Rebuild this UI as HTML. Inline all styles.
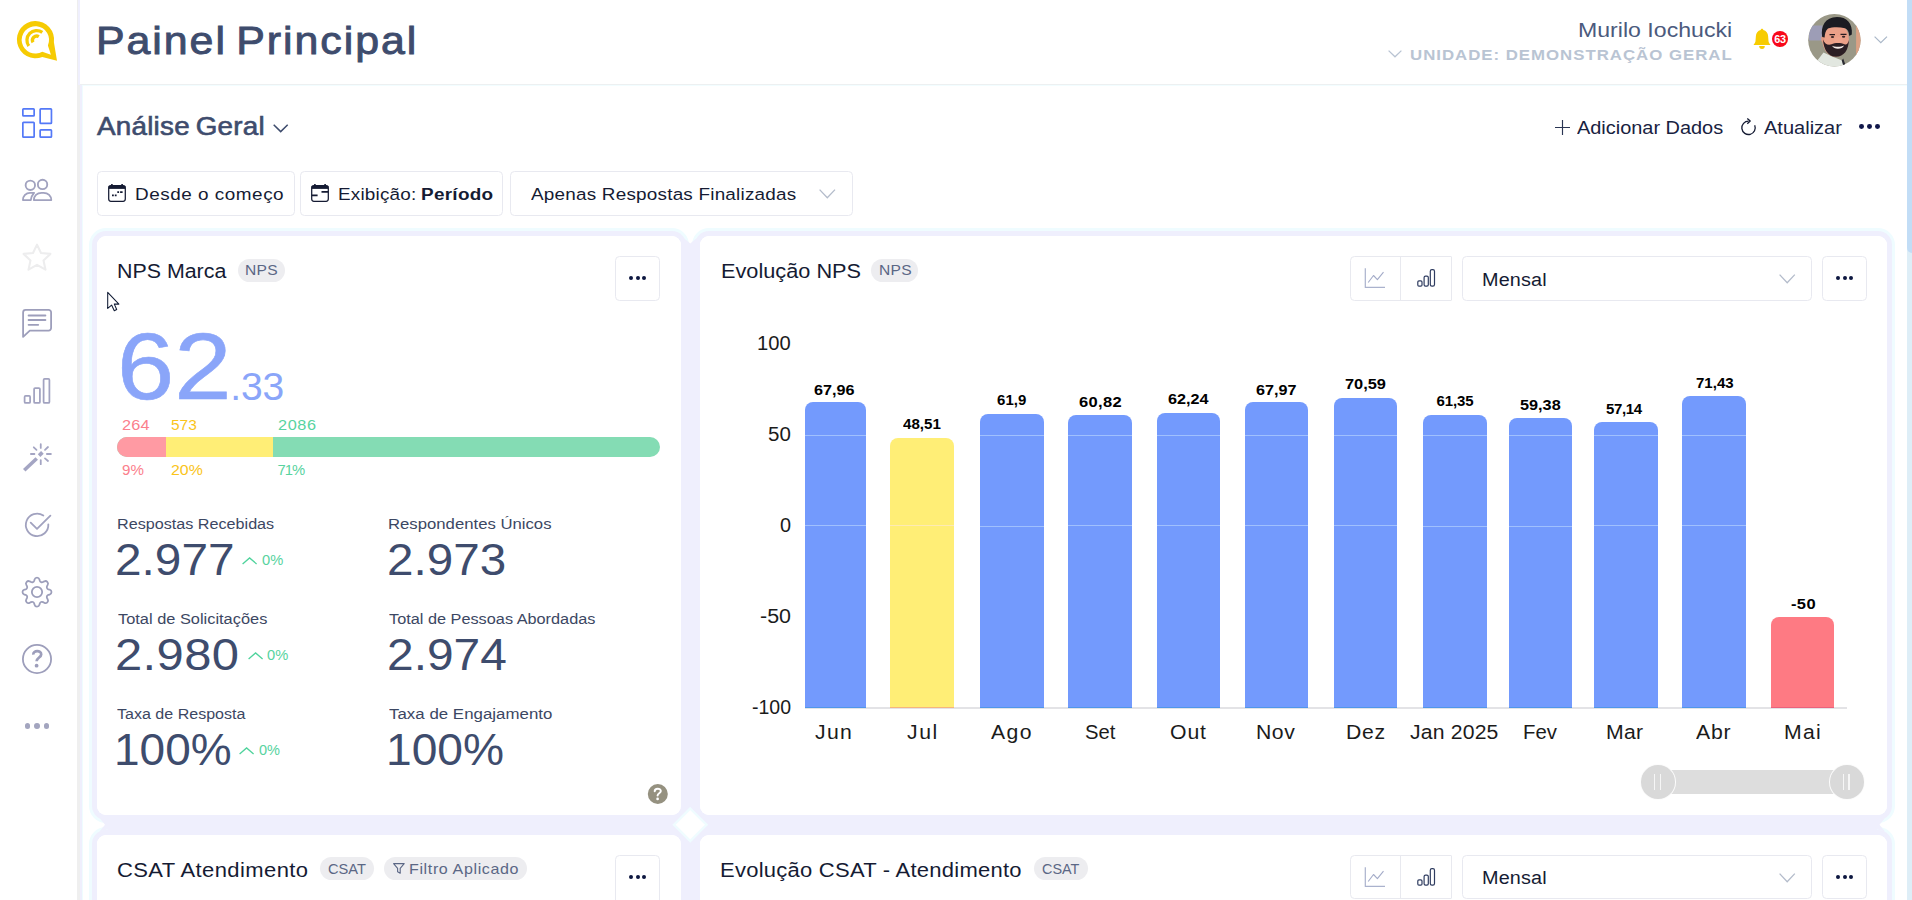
<!DOCTYPE html>
<html lang="pt-BR"><head><meta charset="utf-8"><title>Painel Principal</title>
<style>
*{box-sizing:border-box;margin:0;padding:0}
html,body{width:1912px;height:900px;overflow:hidden;background:#fff;font-family:"Liberation Sans",sans-serif}
body{position:relative}
.abs{position:absolute}
.t{position:absolute;transform-origin:0 50%;white-space:pre;line-height:1;font-family:"Liberation Sans",sans-serif}
#sidebar{position:absolute;left:0;top:0;width:77px;height:900px;background:#fff}
#sideborder{position:absolute;left:77px;top:0;width:3px;height:85px;background:linear-gradient(90deg,#eeeeee 0,#eeeeee 1px,#efeffd 1px,#efeffd 3px)}
#sideshadow{position:absolute;left:77px;top:85px;width:6px;height:815px;background:linear-gradient(90deg,#efefef 0,#efefef 3px,#efeffd 3px,#efeffd 5px,#effcff 5px,#effcff 6px)}
#header{position:absolute;left:80px;top:0;width:1827px;height:84px;background:#fff}
#hline{position:absolute;left:80px;top:84px;width:1827px;height:2px;background:linear-gradient(180deg,#edf0f1 0,#edf0f1 50%,#f2fdff 50%,#f2fdff 100%)}
#vscroll{position:absolute;left:1907px;top:0;width:5px;height:900px;background:#deeef7}
#vthumb{position:absolute;left:1907px;top:-10px;width:10px;height:262.700px;background:#c2ddf6;border-radius:5px}
.card{position:absolute;background:#fff;border-radius:9px;box-shadow:0 0 0 5px #efeffd,0 0 0 8px #effcff}
.gap{position:absolute;background:#efeffd}
.btn{position:absolute;background:#fff;border:1px solid #e8e9f0;border-radius:4.500px}
.pill{position:absolute;background:#ededf0;border-radius:12px}
.dot{position:absolute;border-radius:50%}
svg{position:absolute;overflow:visible}
.bar{position:absolute;border-radius:8px 8px 0 0}

</style></head>
<body>
<div id="sidebar"></div>
<div id="header"></div><div id="hline"></div>
<div id="sideborder"></div>
<div id="sideshadow"></div>
<div id="vscroll"></div><div id="vthumb"></div>

<!-- logo -->
<svg style="left:12px;top:15px" width="50" height="50" viewBox="12 15 50 50">
  <path fill-rule="evenodd" fill="#f6cb03" d="M42.3 56.900A18.600 18.600 0 1 1 53.900 42.200L57 60.800ZM47.900 45.400L50.900 54.700L42.300 51.700A13.700 13.700 0 1 1 47.900 45.400Z"/>
  <path d="M28.810 46.030A9.750 9.750 0 0 1 42.290 32.310" fill="none" stroke="#f6cb03" stroke-width="3.300"/>
  <path d="M33.020 42.430A4.250 4.250 0 0 1 38.830 36.620" fill="none" stroke="#f6cb03" stroke-width="3.300"/>
</svg>

<!-- sidebar icons -->
<svg style="left:22px;top:108px" width="31" height="31" viewBox="0 0 31 31" fill="none" stroke="#5479f7" stroke-width="1.700">
  <rect x=".85" y=".85" width="11.300" height="7" rx=".7"/><rect x=".85" y="14.350" width="11.300" height="14.800" rx=".7"/>
  <rect x="18.150" y=".85" width="11.300" height="14.600" rx=".7"/><rect x="18.150" y="21.850" width="11.300" height="7.300" rx=".7"/>
</svg>
<svg style="left:15px;top:170px" width="45" height="40" viewBox="15 170 45 40" fill="none" stroke="#a1a2bf" stroke-width="1.850" stroke-linejoin="round">
  <circle cx="30.330" cy="185.330" r="4.700"/><circle cx="42.550" cy="184.450" r="4.700"/>
  <path d="M33.850 200.050C33.850 196 37 192.850 41.500 192.850H43.600C48.100 192.850 51.270 196 51.270 200.050Z"/>
  <path d="M22.950 200.050C22.950 196 26 192.850 30 192.850H34.100C32.300 194.800 31.100 197.300 30.800 200.050Z"/>
</svg>
<svg style="left:15px;top:235px" width="45" height="45" viewBox="15 235 45 45" fill="none" stroke="#ededee" stroke-width="2.100" stroke-linejoin="round">
  <path d="M37 244.600L41 253L50.400 253.900L43.500 260.400L45.500 269.700L37 264.900L28.500 269.700L30.500 260.400L23.600 253.900L33 253Z"/>
</svg>
<svg style="left:15px;top:300px" width="45" height="45" viewBox="15 300 45 45" fill="none" stroke="#9d9ebb" stroke-width="1.800" stroke-linejoin="round" stroke-linecap="round">
  <path d="M25.600 309.900H48.600A2.500 2.500 0 0 1 51.100 312.400V328.100A2.500 2.500 0 0 1 48.600 330.600H29.800L23.100 336.900V312.400A2.500 2.500 0 0 1 25.600 309.900Z"/>
  <path d="M28.600 315.500H45.400M28.600 320H45.400M28.600 324.850H38.200" stroke-width="1.900"/>
</svg>
<svg style="left:15px;top:370px" width="45" height="45" viewBox="15 370 45 45" fill="none" stroke="#a2a3c0" stroke-width="1.750">
  <rect x="24.600" y="395.900" width="5.500" height="7" rx="1"/><rect x="34.100" y="388.100" width="5.800" height="14.800" rx="1"/><rect x="43.600" y="378.900" width="5.800" height="24" rx="1"/>
</svg>
<svg style="left:15px;top:435px" width="45" height="45" viewBox="15 435 45 45" fill="none" stroke="#a4a5c3" stroke-width="1.800" stroke-linecap="round">
  <path d="M24.250 470.250L36.750 458.500" stroke-width="3.600" stroke-linecap="butt"/>
  <path d="M39.100 455.600L42.400 452.400" stroke-width="3.700" stroke-linecap="butt"/>
  <path d="M40.750 444.200V447.900M40.750 460.100V464.200M30.900 454H34.400M46.900 454H50.900M33.800 447.300L36.500 449.800M45 449.800L48 447M45 458.400L48 461"/>
</svg>
<svg style="left:15px;top:505px" width="45" height="40" viewBox="15 505 45 40" fill="none" stroke="#a1a2bf" stroke-width="1.800" stroke-linecap="round" stroke-linejoin="round">
  <path d="M43.330 515.530A11.250 11.250 0 1 0 48.330 524.310"/><path d="M30.700 522.700L37 528.900L50.400 515.600"/>
</svg>
<svg style="left:22px;top:577px" width="30" height="30" viewBox="0 0 32 32" fill="none" stroke="#9c9eba" stroke-width="1.900" stroke-linejoin="round">
  <circle cx="16" cy="16" r="5.500"/>
  <path d="M13.4 2.6a2.7 2.7 0 0 1 5.2 0l.4 1.4a2.4 2.4 0 0 0 3.4 1.4l1.3-.7a2.7 2.7 0 0 1 3.7 3.7l-.7 1.3a2.4 2.4 0 0 0 1.4 3.4l1.4.4a2.7 2.7 0 0 1 0 5.2l-1.4.4a2.4 2.4 0 0 0-1.4 3.4l.7 1.3a2.7 2.7 0 0 1-3.7 3.7l-1.3-.7a2.4 2.4 0 0 0-3.4 1.4l-.4 1.4a2.7 2.7 0 0 1-5.2 0l-.4-1.4a2.4 2.4 0 0 0-3.4-1.4l-1.3.7a2.7 2.7 0 0 1-3.7-3.7l.7-1.3a2.4 2.4 0 0 0-1.4-3.4l-1.4-.4a2.7 2.7 0 0 1 0-5.2l1.4-.4a2.4 2.4 0 0 0 1.4-3.4l-.7-1.3a2.7 2.7 0 0 1 3.7-3.7l1.3.7a2.4 2.4 0 0 0 3.4-1.4z"/>
</svg>
<svg style="left:15px;top:637px" width="45" height="45" viewBox="15 637 45 45" fill="none" stroke="#9d9ebb" stroke-width="1.800">
  <circle cx="37" cy="659" r="14.100"/>
  <path d="M33.300 654.600C33.100 650.100 41.200 650 41.200 654.400C41.200 657.400 36.600 657.600 36.600 661.300" stroke-width="2.700"/>
  <circle cx="36.600" cy="665.700" r="1.900" fill="#9d9ebb" stroke="none"/>
</svg>
<div class="dot" style="left:24.7px;top:722.8px;width:5.8px;height:5.8px;background:#a3a5bf"></div>
<div class="dot" style="left:34.1px;top:722.8px;width:5.8px;height:5.8px;background:#a3a5bf"></div>
<div class="dot" style="left:43.5px;top:722.8px;width:5.8px;height:5.8px;background:#a3a5bf"></div>

<!-- header right -->
<svg style="left:1387.5px;top:50px" width="14" height="8" viewBox="0 0 14 8" fill="none" stroke="#b9c4d3" stroke-width="1.3"><path d="M.6.6L7 6.8L13.4.6"/></svg>
<svg style="left:1745px;top:20px" width="55" height="40" viewBox="1745 20 55 40" fill="#f7cc00">
  <path d="M1762 28.800C1762.800 28.800 1763.300 29.400 1763.300 30.100C1766.200 30.800 1768 33.200 1768.100 36L1768.500 41C1768.600 42.300 1769.300 43.500 1770.300 44.400V45.100H1753.700V44.400C1754.700 43.500 1755.400 42.300 1755.500 41L1755.900 36C1756 33.200 1757.800 30.800 1760.700 30.100C1760.700 29.400 1761.200 28.800 1762 28.800Z"/>
  <path d="M1759.200 46.100H1764.800A2.800 3 0 0 1 1759.200 46.100Z"/>
</svg>
<div class="dot" style="left:1772px;top:30.9px;width:16.100px;height:16.100px;background:#f8081a"></div>
<!-- avatar -->
<svg style="left:1808.2px;top:13.6px" width="53" height="53" viewBox="0 0 53 53">
  <defs><clipPath id="av"><circle cx="26.4" cy="26.3" r="26.2"/></clipPath></defs>
  <g clip-path="url(#av)">
    <rect width="53" height="53" fill="#9a9887"/>
    <rect x="1" y="11.500" width="13.500" height="15" fill="#9d9db6"/>
    <rect x="48.100" y="4" width="5" height="46" fill="#dba184"/>
    <path d="M9 47L15.500 38.500L24 42.400L34.300 46.600L35.500 53H12Z" fill="#e2e7e0"/>
    <path d="M33.800 46.400L35.600 53H38.200L35.200 44.500Z" fill="#2b2b33"/>
    <ellipse cx="27.600" cy="25.600" rx="13.300" ry="17.200" fill="#eba088"/>
    <ellipse cx="14.800" cy="25" rx="1.600" ry="3" fill="#e09880"/>
    <path d="M14.200 23C12.500 12 17 3.200 29 3C38.500 3 45 9 43.800 20.500L41.300 22C41 17.500 39.500 15 37 14.200C31 12.600 24 13 20 14.500C17.500 16.500 16.800 20 16.600 23.500Z" fill="#1b1b22"/>
    <path d="M15 25.500C15.500 35 20 42.800 28 42.800C36 42.800 40.500 36 41 26C39.800 30 38.500 31 36.500 30.300C33 28.600 27 28.600 23.500 30.300C20 31.500 16.500 30 15 25.500Z" fill="#2b1e24"/>
    <path d="M24 31.800C27 33.200 33 33.200 36 31.500C34.500 35.600 26 35.800 24 31.800Z" fill="#f6ece8"/>
    <path d="M21.500 20.600H27M32.500 20.400H38.500" stroke="#2a1c20" stroke-width="1.300"/>
    <ellipse cx="24.500" cy="23" rx="1.700" ry="1" fill="#3c2626"/><ellipse cx="35.600" cy="22.800" rx="1.700" ry="1" fill="#3c2626"/>
    <ellipse cx="30.500" cy="26" rx="4.500" ry="3" fill="#f2a58f" opacity=".7"/>
  </g>
</svg>
<svg style="left:1874.2px;top:35.6px" width="14" height="8" viewBox="0 0 14 8" fill="none" stroke="#a9b7c8" stroke-width="1.2"><path d="M.6.6L6.800 6.700L13 .6"/></svg>

<!-- sub header -->
<svg style="left:273px;top:124.300px" width="16" height="9" viewBox="0 0 16 9" fill="none" stroke="#3e4c6d" stroke-width="1.5"><path d="M.7.7L7.700 7.600L14.700.7"/></svg>
<svg style="left:1554.5px;top:119.700px" width="15" height="15" viewBox="0 0 15 15" fill="none" stroke="#2a3553" stroke-width="1.150"><path d="M7.500 0V15M0 7.500H15"/></svg>
<svg style="left:1740px;top:118px" width="17" height="18" viewBox="0 0 17 18" fill="none" stroke="#151b33" stroke-width="1.300">
  <path d="M8.600 3.100A6.700 6.700 0 1 0 14.700 7.200"/><path d="M7.300.4L10.200 3.100L7.300 5.800" stroke-linejoin="round"/>
</svg>
<div class="dot" style="left:1859.3px;top:124.300px;width:4.800px;height:4.800px;background:#10174a"></div>
<div class="dot" style="left:1867.3px;top:124.300px;width:4.800px;height:4.800px;background:#10174a"></div>
<div class="dot" style="left:1875.3px;top:124.300px;width:4.800px;height:4.800px;background:#10174a"></div>

<!-- filter buttons -->
<div class="btn" style="left:97px;top:171px;width:197.500px;height:44.600px"></div>
<div class="btn" style="left:299.800px;top:171px;width:203.700px;height:44.600px"></div>
<div class="btn" style="left:509.500px;top:171px;width:343px;height:44.600px"></div>
<svg style="left:108px;top:184px" width="18" height="18" viewBox="0 0 18 18" fill="none" stroke="#151b33" stroke-width="1.250">
  <rect x=".7" y="1.600" width="16.600" height="15.700" rx="2.200"/><path d="M.7 3.400H17.300" stroke-width="3"/>
  <path d="M3.900 0V2M14.100 0V2" stroke-width="1.600"/>
  <path d="M4 11.400H5.800M6.800 11.400H8.600M9.300 8.100H11.100M12.100 8.100H14.600" stroke-width="1.700"/>
</svg>
<svg style="left:310.700px;top:184px" width="18" height="18" viewBox="0 0 18 18" fill="none" stroke="#151b33" stroke-width="1.250">
  <rect x=".7" y="1.600" width="16.600" height="15.700" rx="2.200"/><path d="M.7 3.400H17.300" stroke-width="3"/>
  <path d="M3.900 0V2M14.100 0V2" stroke-width="1.600"/>
  <path d="M.7 11.400H6.600M10.500 7.900H17.300" stroke-width="1.800"/>
</svg>
<svg style="left:819.300px;top:189.200px" width="17" height="10" viewBox="0 0 17 10" fill="none" stroke="#b4bccb" stroke-width="1.300"><path d="M.6.6L8.300 8.800L16 .6"/></svg>

<!-- cards (shadow rings) -->
<div class="card" style="left:97px;top:235.500px;width:583.500px;height:579.500px"></div>
<div class="card" style="left:700px;top:235.500px;width:1187.200px;height:579.500px"></div>
<div class="card" style="left:97px;top:835px;width:583.500px;height:100px"></div>
<div class="card" style="left:700px;top:835px;width:1187.200px;height:100px"></div>
<!-- lavender gap fill -->
<svg style="left:0;top:0" width="1912" height="900" viewBox="0 0 1912 900">
  <path fill="#efeffd" d="M683.600 238L690.250 243.500L696.900 238L695 246.500H700V900H680.500V246.500H685.500Z"/>
  <path fill="#efeffd" d="M99.500 818.100L105 824.750L99.500 831.400L107.500 829.500V835H1877V829.500L1885 831.400L1879.500 824.750L1885 818.100L1877 820V815H107.500V820Z"/>
  <path fill="#fff" stroke="#effcff" stroke-width="2.400" d="M690.250 808.500L706.500 824.750L690.250 841L674 824.750Z"/>
</svg>
<!-- card bodies -->
<div class="abs" style="left:97px;top:235.500px;width:583.500px;height:579.500px;background:#fff;border-radius:9px"></div>
<div class="abs" style="left:700px;top:235.500px;width:1187.200px;height:579.500px;background:#fff;border-radius:9px"></div>
<div class="abs" style="left:97px;top:835px;width:583.500px;height:100px;background:#fff;border-radius:9px"></div>
<div class="abs" style="left:700px;top:835px;width:1187.200px;height:100px;background:#fff;border-radius:9px"></div>
<div class="pill" style="left:237.7px;top:259px;width:47px;height:23px"></div>
<div class="btn" style="left:615.4px;top:256.3px;width:44.3px;height:44.3px"></div>
<div class="dot" style="left:629.45px;top:275.95px;width:3.90px;height:3.90px;background:#0d1740"></div>
<div class="dot" style="left:635.85px;top:275.95px;width:3.90px;height:3.90px;background:#0d1740"></div>
<div class="dot" style="left:642.25px;top:275.95px;width:3.90px;height:3.90px;background:#0d1740"></div>
<div class="abs" style="left:116.8px;top:437px;width:543.4px;height:20px;border-radius:10px;overflow:hidden;background:#84dcb4"><div class="abs" style="left:0;top:0;width:49.1px;height:20px;background:#ff9aa3"></div><div class="abs" style="left:49.1px;top:0;width:107.6px;height:20px;background:#ffee76"></div></div>
<svg style="left:242.2px;top:556.9px" width="15.2" height="7.6" viewBox="0 0 15.2 7.6" fill="none" stroke="#4fd39c" stroke-width="1.3"><path d="M.6 7.0L7.6 .9L14.6 7.0"/></svg>
<svg style="left:247.8px;top:651.6px" width="15.2" height="7.6" viewBox="0 0 15.2 7.6" fill="none" stroke="#4fd39c" stroke-width="1.3"><path d="M.6 7.0L7.6 .9L14.6 7.0"/></svg>
<svg style="left:239.2px;top:746.5px" width="15.2" height="7.6" viewBox="0 0 15.2 7.6" fill="none" stroke="#4fd39c" stroke-width="1.3"><path d="M.6 7.0L7.6 .9L14.6 7.0"/></svg>
<svg style="left:640px;top:776px" width="36" height="36" viewBox="640 776 36 36"><circle cx="657.8" cy="794" r="10" fill="#959180"/><path d="M654.7 791.2C654.7 787.9 660.8 787.9 660.8 791.1C660.8 793.3 657.6 793.3 657.6 795.6" fill="none" stroke="#fff" stroke-width="2" stroke-linecap="round"/><circle cx="657.6" cy="798.9" r="1.35" fill="#fff"/></svg>
<svg style="left:100px;top:285px" width="30" height="35" viewBox="100 285 30 35"><path d="M107.700 292.400V308.400L111.600 305.100L114.300 310.700L116.700 309.500L114.300 304.100H118.900Z" fill="#fff" stroke="#0f1a33" stroke-width="1.050" stroke-linejoin="round"/></svg>
<div class="pill" style="left:871px;top:259px;width:47px;height:23px"></div>
<div class="btn" style="left:1349.5px;top:256.3px;width:102px;height:44.3px;border-radius:4.5px 1px 1px 4.5px;border-color:#e8e9ef"></div>
<div class="abs" style="left:1400px;top:256.3px;width:1px;height:44.3px;background:#e8e9ef"></div>
<svg style="left:1340px;top:250px" width="130" height="58" viewBox="1340 250 130 58" fill="none" stroke-linejoin="round"><path d="M1365.3 268.2V287.4H1385" stroke="#aab2cd" stroke-width="1.2"/><path d="M1368.2 282.5L1373.5 275.5L1377.4 279.6L1383.5 272.1" stroke="#a3abc8" stroke-width="1.1"/><g stroke="#2f3c60" stroke-width="1.2"><rect x="1417.8" y="280.9" width="4.2" height="5.2" rx="1.2"/><rect x="1424.1" y="276.1" width="4.2" height="10" rx="1.4"/><rect x="1430.3" y="269.6" width="4.2" height="16.5" rx="1.6"/></g></svg>
<div class="btn" style="left:1462.3px;top:256.3px;width:349.3px;height:44.3px"></div>
<svg style="left:1779px;top:274.4px" width="17" height="10" viewBox="0 0 17 10" fill="none" stroke="#b4bccb" stroke-width="1.3"><path d="M.6.6L8.2 8.8L15.8.6"/></svg>
<div class="btn" style="left:1822.3px;top:256.3px;width:44.3px;height:44.3px"></div>
<div class="dot" style="left:1836.25px;top:275.95px;width:3.90px;height:3.90px;background:#0d1740"></div>
<div class="dot" style="left:1842.65px;top:275.95px;width:3.90px;height:3.90px;background:#0d1740"></div>
<div class="dot" style="left:1849.05px;top:275.95px;width:3.90px;height:3.90px;background:#0d1740"></div>
<div class="abs" style="left:805px;top:707.4px;width:1042px;height:1.3px;background:#e3e3e6"></div>
<div class="bar" style="left:805.1px;top:402.4px;width:60.5px;height:305.8px;background:#739afd"><div class="abs" style="left:0;top:32.2px;width:100%;height:1px;background:#a0c0fe"></div><div class="abs" style="left:0;top:123.1px;width:100%;height:1px;background:#a0c0fe"></div><div class="abs" style="left:0;bottom:0;width:100%;height:1px;background:#4f96ea"></div></div>
<div class="bar" style="left:890.4px;top:437.8px;width:63.6px;height:270.4px;background:#ffee76"><div class="abs" style="left:0;top:87.7px;width:100%;height:1px;background:#fdeab4"></div><div class="abs" style="left:0;bottom:0;width:100%;height:1px;background:#f6b57c"></div></div>
<div class="bar" style="left:980.1px;top:413.5px;width:63.5px;height:294.7px;background:#739afd"><div class="abs" style="left:0;top:21.1px;width:100%;height:1px;background:#a0c0fe"></div><div class="abs" style="left:0;top:112.0px;width:100%;height:1px;background:#a0c0fe"></div><div class="abs" style="left:0;bottom:0;width:100%;height:1px;background:#4f96ea"></div></div>
<div class="bar" style="left:1068.3px;top:415.4px;width:63.6px;height:292.8px;background:#739afd"><div class="abs" style="left:0;top:19.2px;width:100%;height:1px;background:#a0c0fe"></div><div class="abs" style="left:0;top:110.1px;width:100%;height:1px;background:#a0c0fe"></div><div class="abs" style="left:0;bottom:0;width:100%;height:1px;background:#4f96ea"></div></div>
<div class="bar" style="left:1156.7px;top:412.8px;width:63.6px;height:295.4px;background:#739afd"><div class="abs" style="left:0;top:21.8px;width:100%;height:1px;background:#a0c0fe"></div><div class="abs" style="left:0;top:112.7px;width:100%;height:1px;background:#a0c0fe"></div><div class="abs" style="left:0;bottom:0;width:100%;height:1px;background:#4f96ea"></div></div>
<div class="bar" style="left:1245.2px;top:402.4px;width:63.2px;height:305.8px;background:#739afd"><div class="abs" style="left:0;top:32.2px;width:100%;height:1px;background:#a0c0fe"></div><div class="abs" style="left:0;top:123.1px;width:100%;height:1px;background:#a0c0fe"></div><div class="abs" style="left:0;bottom:0;width:100%;height:1px;background:#4f96ea"></div></div>
<div class="bar" style="left:1333.5px;top:397.7px;width:63.4px;height:310.5px;background:#739afd"><div class="abs" style="left:0;top:36.9px;width:100%;height:1px;background:#a0c0fe"></div><div class="abs" style="left:0;top:127.8px;width:100%;height:1px;background:#a0c0fe"></div><div class="abs" style="left:0;bottom:0;width:100%;height:1px;background:#4f96ea"></div></div>
<div class="bar" style="left:1423.3px;top:414.5px;width:63.6px;height:293.7px;background:#739afd"><div class="abs" style="left:0;top:20.1px;width:100%;height:1px;background:#a0c0fe"></div><div class="abs" style="left:0;top:111.0px;width:100%;height:1px;background:#a0c0fe"></div><div class="abs" style="left:0;bottom:0;width:100%;height:1px;background:#4f96ea"></div></div>
<div class="bar" style="left:1508.6px;top:418.0px;width:63.4px;height:290.2px;background:#739afd"><div class="abs" style="left:0;top:16.6px;width:100%;height:1px;background:#a0c0fe"></div><div class="abs" style="left:0;top:107.5px;width:100%;height:1px;background:#a0c0fe"></div><div class="abs" style="left:0;bottom:0;width:100%;height:1px;background:#4f96ea"></div></div>
<div class="bar" style="left:1594px;top:422.1px;width:63.5px;height:286.1px;background:#739afd"><div class="abs" style="left:0;top:12.5px;width:100%;height:1px;background:#a0c0fe"></div><div class="abs" style="left:0;top:103.4px;width:100%;height:1px;background:#a0c0fe"></div><div class="abs" style="left:0;bottom:0;width:100%;height:1px;background:#4f96ea"></div></div>
<div class="bar" style="left:1682.3px;top:396.1px;width:63.4px;height:312.1px;background:#739afd"><div class="abs" style="left:0;top:38.5px;width:100%;height:1px;background:#a0c0fe"></div><div class="abs" style="left:0;top:129.4px;width:100%;height:1px;background:#a0c0fe"></div><div class="abs" style="left:0;bottom:0;width:100%;height:1px;background:#4f96ea"></div></div>
<div class="bar" style="left:1770.8px;top:616.9px;width:63.5px;height:91.3px;background:#fe7a83"><div class="abs" style="left:0;bottom:0;width:100%;height:1px;background:#ea627c"></div></div>
<div class="abs" style="left:1658px;top:770.1px;width:189px;height:23.7px;background:#dddddd"></div>
<div class="dot" style="left:1641.3px;top:765.3px;width:33.6px;height:33.6px;background:#d9d9d9;box-shadow:0 0 0 1px #fcfcfc"></div>
<div class="abs" style="left:1653.9px;top:774.1px;width:1.4px;height:15.5px;background:#f6f6f6"></div>
<div class="abs" style="left:1659.6px;top:774.1px;width:1.4px;height:15.5px;background:#f6f6f6"></div>
<div class="dot" style="left:1830.1px;top:765.3px;width:33.6px;height:33.6px;background:#d9d9d9;box-shadow:0 0 0 1px #fcfcfc"></div>
<div class="abs" style="left:1842.7px;top:774.1px;width:1.4px;height:15.5px;background:#f6f6f6"></div>
<div class="abs" style="left:1848.4px;top:774.1px;width:1.4px;height:15.5px;background:#f6f6f6"></div>
<div class="pill" style="left:320px;top:857.2px;width:54px;height:23px"></div>
<div class="pill" style="left:384px;top:857.2px;width:143px;height:23px"></div>
<svg style="left:392.6px;top:863px" width="12" height="11" viewBox="0 0 12 11" fill="none" stroke="#5b6785" stroke-width="1.1" stroke-linejoin="round"><path d="M.6.6H11.2L7.2 5.3V10.2L4.6 8.8V5.3Z"/></svg>
<div class="btn" style="left:615.4px;top:855px;width:44.3px;height:60px"></div>
<div class="dot" style="left:629.45px;top:874.75px;width:3.90px;height:3.90px;background:#0d1740"></div>
<div class="dot" style="left:635.85px;top:874.75px;width:3.90px;height:3.90px;background:#0d1740"></div>
<div class="dot" style="left:642.25px;top:874.75px;width:3.90px;height:3.90px;background:#0d1740"></div>
<div class="pill" style="left:1034px;top:857.2px;width:54px;height:23px"></div>
<div class="btn" style="left:1349.5px;top:855.0px;width:102px;height:44.3px;border-radius:4.5px 1px 1px 4.5px;border-color:#e8e9ef"></div>
<div class="abs" style="left:1400px;top:855.0px;width:1px;height:44.3px;background:#e8e9ef"></div>
<svg style="left:1340px;top:848.7px" width="130" height="58" viewBox="1340 250 130 58" fill="none" stroke-linejoin="round"><path d="M1365.3 268.2V287.4H1385" stroke="#aab2cd" stroke-width="1.2"/><path d="M1368.2 282.5L1373.5 275.5L1377.4 279.6L1383.5 272.1" stroke="#a3abc8" stroke-width="1.1"/><g stroke="#2f3c60" stroke-width="1.2"><rect x="1417.8" y="280.9" width="4.2" height="5.2" rx="1.2"/><rect x="1424.1" y="276.1" width="4.2" height="10" rx="1.4"/><rect x="1430.3" y="269.6" width="4.2" height="16.5" rx="1.6"/></g></svg>
<div class="btn" style="left:1462.3px;top:855.0px;width:349.3px;height:44.3px"></div>
<svg style="left:1779px;top:873.1px" width="17" height="10" viewBox="0 0 17 10" fill="none" stroke="#b4bccb" stroke-width="1.3"><path d="M.6.6L8.2 8.8L15.8.6"/></svg>
<div class="btn" style="left:1822.3px;top:855.0px;width:44.3px;height:44.3px"></div>
<div class="dot" style="left:1836.25px;top:874.65px;width:3.90px;height:3.90px;background:#0d1740"></div>
<div class="dot" style="left:1842.65px;top:874.65px;width:3.90px;height:3.90px;background:#0d1740"></div>
<div class="dot" style="left:1849.05px;top:874.65px;width:3.90px;height:3.90px;background:#0d1740"></div>
<div id="texts">
<span class="t" style="left:95.70px;top:20.99px;font-size:39px;font-weight:400;color:#3e4c6d;letter-spacing:1.760px;transform:scaleX(1.1000);-webkit-text-stroke:.9px #3e4c6d;word-spacing:-4px;">Painel Principal</span>
<span class="t" style="left:1577.60px;top:18.72px;font-size:21px;font-weight:400;color:#4b5a7d;letter-spacing:0.005px;transform:scaleX(1.1000);">Murilo Iochucki</span>
<span class="t" style="left:1409.70px;top:46.85px;font-size:15.3px;font-weight:bold;color:#b9c4d3;letter-spacing:0.886px;transform:scaleX(1.1000);">UNIDADE: DEMONSTRAÇÃO GERAL</span>
<span class="t" style="left:1774.20px;top:33.67px;font-size:10.9px;font-weight:bold;color:#ffffff;letter-spacing:-0.157px;transform:scaleX(1.0000);">63</span>
<span class="t" style="left:97.20px;top:114.48px;font-size:25.3px;font-weight:400;color:#3e4c6d;letter-spacing:0.208px;transform:scaleX(1.1000);-webkit-text-stroke:.6px #3e4c6d;word-spacing:-2px;">Análise Geral</span>
<span class="t" style="left:1577.20px;top:119.01px;font-size:18.3px;font-weight:400;color:#18223f;letter-spacing:0.000px;transform:scaleX(1.0896);">Adicionar Dados</span>
<span class="t" style="left:1763.90px;top:119.01px;font-size:18.3px;font-weight:400;color:#18223f;letter-spacing:0.000px;transform:scaleX(1.0952);">Atualizar</span>
<span class="t" style="left:135.20px;top:185.84px;font-size:17.2px;font-weight:400;color:#151b33;letter-spacing:0.472px;transform:scaleX(1.1000);">Desde o começo</span>
<span class="t" style="left:337.70px;top:185.84px;font-size:17.2px;font-weight:400;color:#151b33;letter-spacing:0.163px;transform:scaleX(1.1000);">Exibição:</span>
<span class="t" style="left:420.90px;top:185.84px;font-size:17.2px;font-weight:bold;color:#151b33;letter-spacing:0.268px;transform:scaleX(1.1000);">Período</span>
<span class="t" style="left:530.50px;top:185.84px;font-size:17.2px;font-weight:400;color:#151b33;letter-spacing:0.188px;transform:scaleX(1.1000);">Apenas Respostas Finalizadas</span>
<span class="t" style="left:116.93px;top:261.37px;font-size:20px;font-weight:400;color:#151b33;letter-spacing:0.000px;transform:scaleX(1.0693);">NPS Marca</span>
<span class="t" style="left:245.20px;top:263.28px;font-size:14.2px;font-weight:400;color:#5b6785;letter-spacing:0.237px;transform:scaleX(1.1000);">NPS</span>
<span class="t" style="left:116.67px;top:319.38px;font-size:95px;font-weight:400;color:#8aa5f9;letter-spacing:0.000px;transform:scaleX(1.0835);-webkit-text-stroke:.6px #8aa5f9;">62</span>
<span class="t" style="left:230.20px;top:367.29px;font-size:39px;font-weight:400;color:#8aa5f9;letter-spacing:-0.063px;transform:scaleX(1.0000);">.33</span>
<span class="t" style="left:121.90px;top:417.67px;font-size:14.8px;font-weight:400;color:#fb808c;letter-spacing:0.225px;transform:scaleX(1.1000);">264</span>
<span class="t" style="left:170.70px;top:417.67px;font-size:14.8px;font-weight:400;color:#fac41a;letter-spacing:0.000px;transform:scaleX(1.0467);">573</span>
<span class="t" style="left:277.60px;top:417.67px;font-size:14.8px;font-weight:400;color:#58d3a0;letter-spacing:0.528px;transform:scaleX(1.1000);">2086</span>
<span class="t" style="left:121.90px;top:462.77px;font-size:14.8px;font-weight:400;color:#fb808c;letter-spacing:0.000px;transform:scaleX(1.0222);">9%</span>
<span class="t" style="left:170.70px;top:462.77px;font-size:14.8px;font-weight:400;color:#fac41a;letter-spacing:0.000px;transform:scaleX(1.0727);">20%</span>
<span class="t" style="left:277.60px;top:462.77px;font-size:14.8px;font-weight:400;color:#58d3a0;letter-spacing:-1.029px;transform:scaleX(1.0000);">71%</span>
<span class="t" style="left:116.94px;top:515.85px;font-size:15.3px;font-weight:400;color:#3c4763;letter-spacing:0.000px;transform:scaleX(1.0563);">Respostas Recebidas</span>
<span class="t" style="left:115.35px;top:538.23px;font-size:44.5px;font-weight:400;color:#3e4c6d;letter-spacing:0.000px;transform:scaleX(1.0733);">2.977</span>
<span class="t" style="left:261.70px;top:552.68px;font-size:14.2px;font-weight:400;color:#58d3a0;letter-spacing:0.000px;transform:scaleX(1.0340);">0%</span>
<span class="t" style="left:388.01px;top:515.85px;font-size:15.3px;font-weight:400;color:#3c4763;letter-spacing:0.000px;transform:scaleX(1.0925);">Respondentes Únicos</span>
<span class="t" style="left:386.96px;top:538.23px;font-size:44.5px;font-weight:400;color:#3e4c6d;letter-spacing:0.000px;transform:scaleX(1.0696);">2.973</span>
<span class="t" style="left:117.50px;top:610.85px;font-size:15.3px;font-weight:400;color:#3c4763;letter-spacing:0.000px;transform:scaleX(1.0708);">Total de Solicitações</span>
<span class="t" style="left:115.30px;top:633.13px;font-size:44.5px;font-weight:400;color:#3e4c6d;letter-spacing:0.348px;transform:scaleX(1.1000);">2.980</span>
<span class="t" style="left:267.20px;top:647.68px;font-size:14.2px;font-weight:400;color:#58d3a0;letter-spacing:0.000px;transform:scaleX(1.0340);">0%</span>
<span class="t" style="left:388.90px;top:610.85px;font-size:15.3px;font-weight:400;color:#3c4763;letter-spacing:0.000px;transform:scaleX(1.0646);">Total de Pessoas Abordadas</span>
<span class="t" style="left:386.95px;top:633.13px;font-size:44.5px;font-weight:400;color:#3e4c6d;letter-spacing:0.000px;transform:scaleX(1.0763);">2.974</span>
<span class="t" style="left:117.00px;top:705.85px;font-size:15.3px;font-weight:400;color:#3c4763;letter-spacing:0.000px;transform:scaleX(1.0485);">Taxa de Resposta</span>
<span class="t" style="left:114.40px;top:727.93px;font-size:44.5px;font-weight:400;color:#3e4c6d;letter-spacing:0.000px;transform:scaleX(1.0334);">100%</span>
<span class="t" style="left:258.70px;top:742.58px;font-size:14.2px;font-weight:400;color:#58d3a0;letter-spacing:0.000px;transform:scaleX(1.0244);">0%</span>
<span class="t" style="left:389.10px;top:705.85px;font-size:15.3px;font-weight:400;color:#3c4763;letter-spacing:0.030px;transform:scaleX(1.1000);">Taxa de Engajamento</span>
<span class="t" style="left:385.99px;top:727.93px;font-size:44.5px;font-weight:400;color:#3e4c6d;letter-spacing:0.000px;transform:scaleX(1.0371);">100%</span>
<span class="t" style="left:720.61px;top:261.37px;font-size:20px;font-weight:400;color:#151b33;letter-spacing:0.000px;transform:scaleX(1.0861);">Evolução NPS</span>
<span class="t" style="left:878.60px;top:263.28px;font-size:14.2px;font-weight:400;color:#5b6785;letter-spacing:0.237px;transform:scaleX(1.1000);">NPS</span>
<span class="t" style="left:1482.30px;top:270.56px;font-size:18px;font-weight:400;color:#151b33;letter-spacing:0.140px;transform:scaleX(1.1000);">Mensal</span>
<span class="t" style="left:756.86px;top:333.69px;font-size:19.5px;font-weight:400;color:#1b1b1b;letter-spacing:0.000px;transform:scaleX(1.0350);">100</span>
<span class="t" style="left:767.70px;top:424.79px;font-size:19.5px;font-weight:400;color:#1b1b1b;letter-spacing:0.000px;transform:scaleX(1.0529);">50</span>
<span class="t" style="left:779.50px;top:515.79px;font-size:19.5px;font-weight:400;color:#1b1b1b;letter-spacing:0.000px;transform:scaleX(1.0182);">0</span>
<span class="t" style="left:759.50px;top:606.69px;font-size:19.5px;font-weight:400;color:#1b1b1b;letter-spacing:0.013px;transform:scaleX(1.1000);">-50</span>
<span class="t" style="left:751.50px;top:697.69px;font-size:19.5px;font-weight:400;color:#1b1b1b;letter-spacing:0.000px;transform:scaleX(1.0004);">-100</span>
<span class="t" style="left:814.70px;top:723.16px;font-size:19.3px;font-weight:400;color:#1b1b1b;letter-spacing:1.227px;transform:scaleX(1.1000);">Jun</span>
<span class="t" style="left:907.30px;top:723.16px;font-size:19.3px;font-weight:400;color:#1b1b1b;letter-spacing:1.409px;transform:scaleX(1.1000);">Jul</span>
<span class="t" style="left:991.20px;top:723.16px;font-size:19.3px;font-weight:400;color:#1b1b1b;letter-spacing:1.299px;transform:scaleX(1.1000);">Ago</span>
<span class="t" style="left:1084.70px;top:723.16px;font-size:19.3px;font-weight:400;color:#1b1b1b;letter-spacing:0.000px;transform:scaleX(1.0479);">Set</span>
<span class="t" style="left:1170.00px;top:723.16px;font-size:19.3px;font-weight:400;color:#1b1b1b;letter-spacing:0.821px;transform:scaleX(1.1000);">Out</span>
<span class="t" style="left:1256.40px;top:723.16px;font-size:19.3px;font-weight:400;color:#1b1b1b;letter-spacing:0.494px;transform:scaleX(1.1000);">Nov</span>
<span class="t" style="left:1346.00px;top:723.16px;font-size:19.3px;font-weight:400;color:#1b1b1b;letter-spacing:0.631px;transform:scaleX(1.1000);">Dez</span>
<span class="t" style="left:1409.80px;top:723.16px;font-size:19.3px;font-weight:400;color:#1b1b1b;letter-spacing:0.146px;transform:scaleX(1.1000);">Jan 2025</span>
<span class="t" style="left:1522.84px;top:723.16px;font-size:19.3px;font-weight:400;color:#1b1b1b;letter-spacing:0.000px;transform:scaleX(1.0571);">Fev</span>
<span class="t" style="left:1606.10px;top:723.16px;font-size:19.3px;font-weight:400;color:#1b1b1b;letter-spacing:0.289px;transform:scaleX(1.1000);">Mar</span>
<span class="t" style="left:1695.60px;top:723.16px;font-size:19.3px;font-weight:400;color:#1b1b1b;letter-spacing:0.754px;transform:scaleX(1.1000);">Abr</span>
<span class="t" style="left:1784.00px;top:723.16px;font-size:19.3px;font-weight:400;color:#1b1b1b;letter-spacing:1.153px;transform:scaleX(1.1000);">Mai</span>
<span class="t" style="left:813.60px;top:381.50px;font-size:15px;font-weight:bold;color:#000000;letter-spacing:0.000px;transform:scaleX(1.0781);">67,96</span>
<span class="t" style="left:903.10px;top:416.00px;font-size:15px;font-weight:bold;color:#000000;letter-spacing:-0.000px;transform:scaleX(1.0082);">48,51</span>
<span class="t" style="left:997.10px;top:392.00px;font-size:15px;font-weight:bold;color:#000000;letter-spacing:-0.017px;transform:scaleX(1.0000);">61,9</span>
<span class="t" style="left:1078.70px;top:393.90px;font-size:15px;font-weight:bold;color:#000000;letter-spacing:0.338px;transform:scaleX(1.1000);">60,82</span>
<span class="t" style="left:1167.70px;top:391.40px;font-size:15px;font-weight:bold;color:#000000;letter-spacing:0.000px;transform:scaleX(1.0787);">62,24</span>
<span class="t" style="left:1256.10px;top:381.50px;font-size:15px;font-weight:bold;color:#000000;letter-spacing:0.000px;transform:scaleX(1.0781);">67,97</span>
<span class="t" style="left:1344.90px;top:376.40px;font-size:15px;font-weight:bold;color:#000000;letter-spacing:0.000px;transform:scaleX(1.0916);">70,59</span>
<span class="t" style="left:1436.60px;top:393.40px;font-size:15px;font-weight:bold;color:#000000;letter-spacing:-0.124px;transform:scaleX(1.0000);">61,35</span>
<span class="t" style="left:1519.70px;top:397.00px;font-size:15px;font-weight:bold;color:#000000;letter-spacing:0.000px;transform:scaleX(1.0835);">59,38</span>
<span class="t" style="left:1606.10px;top:401.30px;font-size:15px;font-weight:bold;color:#000000;letter-spacing:-0.374px;transform:scaleX(1.0000);">57,14</span>
<span class="t" style="left:1695.60px;top:375.00px;font-size:15px;font-weight:bold;color:#000000;letter-spacing:0.000px;transform:scaleX(1.0028);">71,43</span>
<span class="t" style="left:1790.60px;top:596.10px;font-size:15px;font-weight:bold;color:#000000;letter-spacing:0.331px;transform:scaleX(1.1000);">-50</span>
<span class="t" style="left:116.50px;top:860.17px;font-size:20px;font-weight:400;color:#151b33;letter-spacing:0.361px;transform:scaleX(1.1000);">CSAT Atendimento</span>
<span class="t" style="left:327.80px;top:861.88px;font-size:14.2px;font-weight:400;color:#5b6785;letter-spacing:0.000px;transform:scaleX(1.0319);">CSAT</span>
<span class="t" style="left:408.90px;top:861.54px;font-size:14.6px;font-weight:400;color:#5b6785;letter-spacing:0.566px;transform:scaleX(1.1000);">Filtro Aplicado</span>
<span class="t" style="left:719.90px;top:860.17px;font-size:20px;font-weight:400;color:#151b33;letter-spacing:0.224px;transform:scaleX(1.1000);">Evolução CSAT - Atendimento</span>
<span class="t" style="left:1041.70px;top:861.88px;font-size:14.2px;font-weight:400;color:#5b6785;letter-spacing:0.000px;transform:scaleX(1.0157);">CSAT</span>
<span class="t" style="left:1482.30px;top:868.96px;font-size:18px;font-weight:400;color:#151b33;letter-spacing:0.140px;transform:scaleX(1.1000);">Mensal</span>
</div>
</body></html>
